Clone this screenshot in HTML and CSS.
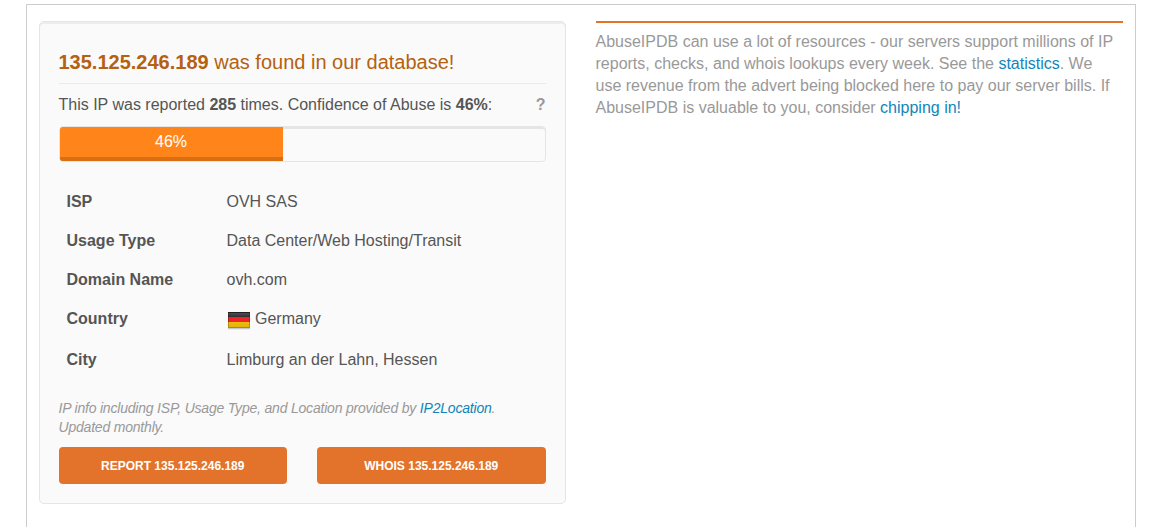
FILE: index.html
```html
<!DOCTYPE html>
<html lang="en">
<head>
	<meta charset="utf-8"/>
	<title>135.125.246.189 | AbuseIPDB</title>
	<link rel="stylesheet" href="styles.css">
</head>
<body>
	<div class="report-wrapper">
		<div class="well">
			<h3><b>135.125.246.189</b> was found in our database!</h3>
			<p class="summary">
				<span>This IP was reported <b>285</b> times. Confidence of Abuse is <b>46%</b>:</span>
				<b class="help">?</b>
			</p>
			<div class="progress">
				<div class="progress-bar" style="width: 46%"><span>46%</span></div>
			</div>
			<table class="table">
				<tr><th>ISP</th><td>OVH SAS</td></tr>
				<tr><th>Usage Type</th><td>Data Center/Web Hosting/Transit</td></tr>
				<tr><th>Domain Name</th><td>ovh.com</td></tr>
				<tr class="country">
					<th>Country</th>
					<td><svg class="flag" width="24" height="18" viewBox="0 0 24 18">
						<defs>
							<linearGradient id="black" x1="0" y1="0" x2="0" y2="1">
								<stop offset="0" stop-color="#555"/>
								<stop offset="1" stop-color="#303030"/>
							</linearGradient>
							<linearGradient id="gold" x1="0" y1="0" x2="0" y2="1">
								<stop offset="0" stop-color="#e9bd0c"/>
								<stop offset="1" stop-color="#e0b00a"/>
							</linearGradient>
						</defs>
						<rect x="1" y="16" width="22" height="1" fill="#000" opacity=".2"/>
						<rect x="1" y="17" width="22" height="1" fill="#000" opacity=".06"/>
						<rect x="1" y="0" width="22" height="5" fill="url(#black)"/>
						<rect x="1" y="5" width="22" height="5" fill="#f0222a"/>
						<rect x="1" y="10" width="22" height="6" fill="url(#gold)"/>
						<rect x="1.5" y=".5" width="21" height="15" fill="none" stroke="#000" stroke-opacity=".22"/>
						<rect x="1" y="0" width="22" height="1" fill="#000" opacity=".5"/>
					</svg>Germany</td>
				</tr>
				<tr><th>City</th><td>Limburg an der Lahn, Hessen</td></tr>
			</table>
			<p class="note">IP info including ISP, Usage Type, and Location provided by <a href="#">IP2Location</a>. Updated monthly.</p>
			<div class="buttons">
				<a class="btn" href="#">Report 135.125.246.189</a>
				<a class="btn" href="#">Whois 135.125.246.189</a>
			</div>
		</div>
		<div class="advert">
			<p>AbuseIPDB can use a lot of resources - our servers support millions of IP reports, checks, and whois lookups every week. See the <a href="#">statistics</a>. We use revenue from the advert being blocked here to pay our server bills. If AbuseIPDB is valuable to you, consider <a href="#">chipping in!</a></p>
		</div>
	</div>
</body>
</html>
```
FILE: styles.css
```css
*{
	box-sizing: border-box;
	margin: 0;
	padding: 0;
}
body{
	height: 527px;
	overflow: hidden;
	padding: 4px 36.5px 0 25.5px;
	background: #fff;
	color: #555;
	font: 16px/22px "Liberation Sans", Arial, sans-serif;
}
a{
	color: #0f86b8;
	text-decoration: none;
}
.report-wrapper{
	display: flex;
	align-items: flex-start;
	gap: 30px;
	height: 540px;
	padding: 16px 12px 0;
	border: 1px solid #ccc;
}

/* left box */
.well{
	width: 527px;
	height: 483px;
	padding: 19px;
	background: #fafafa;
	border: 1px solid #e5e5e5;
	border-radius: 5px;
	box-shadow: inset 0 2px 0 #ededed;
}
.well h3{
	height: 43px;
	padding-top: 10px;
	border-bottom: 1px solid #eaeaea;
	color: #b5610f;
	font-size: 20px;
	font-weight: normal;
}
.summary{
	display: flex;
	justify-content: space-between;
	margin: 10px 0;
}
.help{
	color: #999;
}

.progress{
	height: 36px;
	margin-bottom: 20px;
	border: 1px solid #e5e5e5;
	border-radius: 4px;
	box-shadow: inset 0 2px 0 #e5e5e5;
	overflow: hidden;
}
.progress-bar{
	height: 100%;
	background: #ff851b;
	box-shadow: inset 0 -4px 0 #d96f13;
	color: #fff;
	line-height: 30px;
	text-align: center;
}

.table{
	width: 100%;
	border-collapse: collapse;
}
.table th,
.table td{
	height: 39px;
	padding: 9px 8px 8px;
	text-align: left;
	vertical-align: top;
}
.table th{
	width: 160px;
}
.table .country td{
	height: 41px;
}
.flag{
	margin-right: 4.5px;
	vertical-align: -6px;
}

.note{
	margin: 20px 0 10px;
	color: #999;
	font-size: 14px;
	font-style: italic;
	letter-spacing: -.2px;
	line-height: 19px;
}
.buttons{
	display: flex;
	gap: 30px;
}
.btn{
	flex: 1;
	height: 37px;
	background: #e3732a;
	border-radius: 4px;
	color: #fff;
	font-size: 12px;
	font-weight: bold;
	line-height: 38px;
	text-align: center;
	text-transform: uppercase;
}

/* shown in place of the advert */
.advert{
	width: 527px;
	padding-top: 8px;
	border-top: 2px solid #e3732a;
	color: #999;
}
```
